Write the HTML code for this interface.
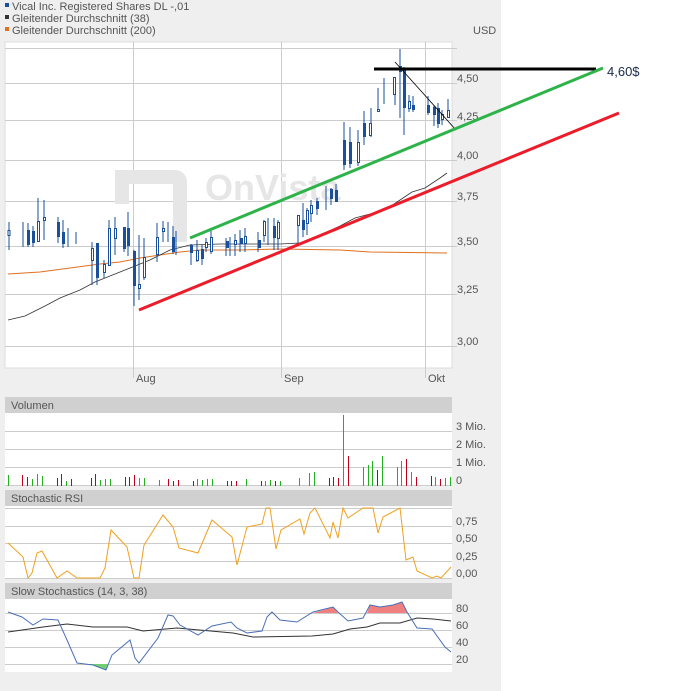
<!DOCTYPE html>
<html><head><meta charset="utf-8"><style>
html,body{margin:0;padding:0;background:#fff;}
body{width:683px;height:691px;position:relative;overflow:hidden;font-family:"Liberation Sans",sans-serif;}
</style></head><body>
<svg width="683" height="691" xmlns="http://www.w3.org/2000/svg" style="position:absolute;left:0;top:0" font-family="Liberation Sans, sans-serif">
<rect x="0" y="0" width="501" height="691" fill="#efefef"/>
<!-- legend -->
<rect x="5" y="3" width="4" height="4" fill="#1a4f9c"/>
<text x="12" y="10" font-size="11" fill="#555">Vical Inc. Registered Shares DL -,01</text>
<rect x="5" y="15" width="4" height="4" fill="#333"/>
<text x="12" y="22" font-size="11" fill="#555">Gleitender Durchschnitt (38)</text>
<rect x="5" y="27" width="4" height="4" fill="#e07020"/>
<text x="12" y="34" font-size="11" fill="#555">Gleitender Durchschnitt (200)</text>
<text x="473" y="34" font-size="11" fill="#555">USD</text>
<!-- main chart -->
<rect x="5" y="42" width="447" height="326" fill="#fff" stroke="#ddd"/>
<g stroke="#ccc" stroke-width="1">
<line x1="5" y1="48.5" x2="457" y2="48.5"/>
<line x1="5" y1="83.5" x2="457" y2="83.5"/>
<line x1="5" y1="120.5" x2="457" y2="120.5"/>
<line x1="5" y1="160.5" x2="457" y2="160.5"/>
<line x1="5" y1="201.5" x2="457" y2="201.5"/>
<line x1="5" y1="246.5" x2="457" y2="246.5"/>
<line x1="5" y1="294.5" x2="457" y2="294.5"/>
<line x1="5" y1="346.5" x2="457" y2="346.5"/>
<line x1="133.5" y1="42" x2="133.5" y2="378"/>
<line x1="281.5" y1="42" x2="281.5" y2="378"/>
<line x1="425.5" y1="42" x2="425.5" y2="378"/>
</g>
<g font-size="11" fill="#555">
<text x="457" y="82">4,50</text>
<text x="457" y="120">4,25</text>
<text x="457" y="159">4,00</text>
<text x="457" y="200">3,75</text>
<text x="457" y="245">3,50</text>
<text x="457" y="293">3,25</text>
<text x="457" y="345">3,00</text>
<text x="136" y="382">Aug</text>
<text x="284" y="382">Sep</text>
<text x="428" y="382">Okt</text>
</g>
<!-- watermark -->
<g fill="#e6e6e6">
<path d="M115 170h60a12 12 0 0 1 12 12v60h-14v-58h-44v20h-14z"/>
<text x="205" y="200" font-size="36" font-weight="bold">OnVista</text>
</g>
<!-- MAs -->
<polyline fill="none" stroke="#e07020" stroke-width="1" points="8,274 40,272 70,268 100,264 120,262 140,258 160,255 180,252 200,250 240,250 280,249 340,250 370,252 447,253"/>
<polyline fill="none" stroke="#333" stroke-width="0.8" points="8,320 25,316 45,306 60,298 80,290 95,282 110,276 130,268 150,260 170,250 190,245 220,244 250,244 280,244 300,243 320,235 340,226 355,218 370,214 385,210 400,200 412,192 425,188 440,178 447,173"/>
<!-- candles wicks -->
<path stroke="#1a4f9c" stroke-width="1" fill="none" d="M9 222V250M23 222V247M28 223V247M33 226V247M38 198V240M44 200V240M58 217V243M63 220V248M68 228V247M76 232V244M92 242V285M97 243V285M104 260V278M109 220V260M115 217V255M124 227V252M128 212V256M134 250V306M139 235V300M144 238V280M157 223V262M163 221V242M168 222V242M173 226V254M176 231V255M191 244V265M197 240V262M202 245V265M206 238V252M211 230V254M226 238V256M230 237V256M235 234V256M240 230V252M245 228V252M258 232V252M264 220V242M268 218V245M274 218V250M278 220V250M298 220V245M303 203V237M307 208V235M311 200V222M317 198V215M326 186V210M331 188V205M336 184V202M344 122V170M350 127V168M358 130V166M364 111V145M371 108V137M378 88V112M384 78V104M395 78V105M400 49V118M404 67V135M409 95V112M413 96V112M428 96V115M434 105V126M438 103V128M442 110V125M448 99V115"/>
<g fill="#1a4f9c">
<rect x="27" y="230" width="3" height="15"/><rect x="32" y="231" width="3" height="12"/><rect x="57" y="222" width="3" height="15"/><rect x="62" y="232" width="3" height="12"/><rect x="96" y="243" width="3" height="35"/><rect x="108" y="244" width="3" height="15"/><rect x="123" y="227" width="3" height="22"/><rect x="127" y="228" width="3" height="18"/><rect x="133" y="251" width="3" height="35"/><rect x="172" y="237" width="3" height="15"/><rect x="190" y="245" width="3" height="8"/><rect x="201" y="249" width="3" height="10"/><rect x="226" y="241" width="3" height="7"/><rect x="240" y="238" width="3" height="6"/><rect x="258" y="240" width="3" height="8"/><rect x="273" y="226" width="3" height="12"/><rect x="302" y="220" width="3" height="10"/><rect x="316" y="201" width="3" height="8"/><rect x="330" y="189" width="3" height="10"/><rect x="335" y="190" width="3" height="12"/><rect x="343" y="140" width="3" height="25"/><rect x="349" y="142" width="3" height="22"/><rect x="363" y="123" width="3" height="14"/><rect x="399" y="66" width="3" height="6"/><rect x="403" y="69" width="3" height="39"/><rect x="412" y="105" width="3" height="5"/><rect x="427" y="105" width="3" height="8"/><rect x="433" y="107" width="3" height="8"/><rect x="437" y="108" width="3" height="16"/>
</g>
<g fill="#fff" stroke="#1a4f9c" stroke-width="1">
<rect x="8" y="230.5" width="2" height="5"/><rect x="37.5" y="221.5" width="2" height="20"/><rect x="43.5" y="217.5" width="2" height="3"/><rect x="91.5" y="248.5" width="2" height="12"/><rect x="103.5" y="264.5" width="2" height="8"/><rect x="108.5" y="228.5" width="2" height="37"/><rect x="114.5" y="228.5" width="2" height="10"/><rect x="138.5" y="284.5" width="2" height="4"/><rect x="143.5" y="257.5" width="2" height="20"/><rect x="156.5" y="237.5" width="2" height="17"/><rect x="162.5" y="228.5" width="2" height="3"/><rect x="196.5" y="250.5" width="2" height="10"/><rect x="205.5" y="242.5" width="2" height="5"/><rect x="210.5" y="237.5" width="2" height="14"/><rect x="234.5" y="240.5" width="2" height="4"/><rect x="244.5" y="236.5" width="2" height="7"/><rect x="263.5" y="221.5" width="2" height="14"/><rect x="277.5" y="222.5" width="2" height="16"/><rect x="297.5" y="215.5" width="2" height="10"/><rect x="306.5" y="210.5" width="2" height="13"/><rect x="310.5" y="205.5" width="2" height="8"/><rect x="357.5" y="142.5" width="2" height="20"/><rect x="369.5" y="123.5" width="2" height="12"/><rect x="377.5" y="109.5" width="2" height="2"/><rect x="393.5" y="77.5" width="2" height="17"/><rect x="408.5" y="101.5" width="2" height="7"/><rect x="441.5" y="114.5" width="2" height="5"/><rect x="447.5" y="110.5" width="2" height="7"/>
</g>
<!-- trend lines -->
<line x1="374" y1="69" x2="596" y2="69" stroke="#000" stroke-width="3"/>
<line x1="395" y1="62" x2="456" y2="130" stroke="#000" stroke-width="0.8"/>
<line x1="190" y1="238" x2="603" y2="68" stroke="#2eb34a" stroke-width="3"/>
<line x1="139" y1="310" x2="619" y2="113" stroke="#ec1c2a" stroke-width="3"/>
<text x="607" y="76" font-size="13" fill="#1a2a4a">4,60$</text>

<!-- Volume panel -->
<rect x="5" y="397" width="447" height="16" fill="#d0d0d0"/>
<text x="11" y="409" font-size="11" fill="#555">Volumen</text>
<rect x="5" y="413" width="447" height="73" fill="#fff"/>
<g stroke="#ccc"><line x1="5" y1="431.5" x2="452" y2="431.5"/><line x1="5" y1="449.5" x2="452" y2="449.5"/><line x1="5" y1="467.5" x2="452" y2="467.5"/><line x1="5" y1="485.5" x2="452" y2="485.5"/></g>
<g font-size="11" fill="#555"><text x="456" y="430">3 Mio.</text><text x="456" y="448">2 Mio.</text><text x="456" y="466">1 Mio.</text><text x="456" y="484">0</text></g>
<path stroke="#22b01e" stroke-width="1" d="M8.5 475V486M32.5 479V486M37.5 474V486M42.5 476V486M66.5 481V486M100.5 480V486M105.5 479V486M110.5 479V486M144.5 478V486M139.5 478V486M159.5 480V486M197.5 479V486M202.5 480V486M207.5 479V486M212.5 479V486M246.5 479V486M265.5 481V486M270.5 480V486M280.5 481V486M299.5 478V486M309.5 473V486M314.5 472V486M343.5 415V486M363.5 467V486M368.5 465V486M372.5 461V486M382.5 456V486M397.5 467V486M401.5 461V486M411.5 472V486M435.5 477V486M445.5 478V486M450.5 477V486"/>
<path stroke="#c0001a" stroke-width="1" d="M22.5 475V486M27.5 477V486M57.5 478V486M61.5 474V486M71.5 479V486M91.5 478V486M95.5 474V486M125.5 477V486M129.5 477V486M134.5 475V486M168.5 479V486M173.5 481V486M178.5 480V486M193.5 481V486M227.5 481V486M231.5 481V486M236.5 481V486M261.5 481V486M275.5 481V486M329.5 478V486M333.5 477V486M338.5 478V486M348.5 456V486M377.5 470V486M406.5 459V486M416.5 477V486M431.5 476V486M440.5 479V486"/>

<!-- Stoch RSI -->
<rect x="5" y="490" width="447" height="16" fill="#d0d0d0"/>
<text x="11" y="502" font-size="11" fill="#555">Stochastic RSI</text>
<rect x="5" y="506" width="447" height="72" fill="#fff"/>
<g stroke="#ccc"><line x1="5" y1="508.5" x2="452" y2="508.5"/><line x1="5" y1="526.5" x2="452" y2="526.5"/><line x1="5" y1="543.5" x2="452" y2="543.5"/><line x1="5" y1="561.5" x2="452" y2="561.5"/><line x1="5" y1="578.5" x2="452" y2="578.5"/></g>
<g font-size="11" fill="#555"><text x="456" y="525">0,75</text><text x="456" y="542">0,50</text><text x="456" y="560">0,25</text><text x="456" y="577">0,00</text></g>
<polyline fill="none" stroke="#f0a020" stroke-width="1" points="8,543 23,557 28,578 32,573 37,553 42,551 57,578 67,571 77,578 100,578 105,568 111,530 127,547 134,578 139,578 144,545 163,515 173,527 179,548 198,553 212,520 232,537 237,565 247,527 262,524 266,508 270,508 276,549 281,530 300,519 304,534 310,513 315,508 330,538 333,522 338,538 343,508 348,518 363,508 373,508 378,533 383,517 400,508 406,560 413,557 417,571 432,578 437,576 441,578 451,567"/>

<!-- Slow Stochastics -->
<rect x="5" y="583" width="447" height="16" fill="#d0d0d0"/>
<text x="11" y="595" font-size="11" fill="#555">Slow Stochastics (14, 3, 38)</text>
<rect x="5" y="599" width="447" height="73" fill="#fff"/>
<g stroke="#ccc"><line x1="5" y1="613.5" x2="452" y2="613.5"/><line x1="5" y1="630.5" x2="452" y2="630.5"/><line x1="5" y1="647.5" x2="452" y2="647.5"/><line x1="5" y1="664.5" x2="452" y2="664.5"/></g>
<g font-size="11" fill="#555"><text x="456" y="612">80</text><text x="456" y="629">60</text><text x="456" y="646">40</text><text x="456" y="663">20</text></g>
<polygon fill="#f08080" points="313,613 333,607 338,613"/>
<polygon fill="#f08080" points="367,613 370,605 380,607 393,605 402,602 407,613"/>
<polygon fill="#70d070" points="84,664 93,665 106,670 108,664"/>
<polyline fill="none" stroke="#333" stroke-width="1" points="8,632 43,627 67,624 93,627 127,627 143,631 177,628 233,633 253,637 312,636 333,634 350,629 367,627 380,623 400,623 417,618 433,619 451,621"/>
<polyline fill="none" stroke="#4a6fb5" stroke-width="1" points="8,612 22,617 33,625 43,619 58,620 67,640 77,663 93,665 106,670 112,655 130,640 135,658 139,663 158,638 168,615 173,616 180,625 198,635 212,626 231,622 237,628 247,633 262,631 267,617 272,612 280,620 297,622 313,612 333,607 338,612 348,621 363,618 370,605 380,607 393,605 402,602 407,612 417,628 432,629 445,647 451,652"/>
</svg>
</body></html>
